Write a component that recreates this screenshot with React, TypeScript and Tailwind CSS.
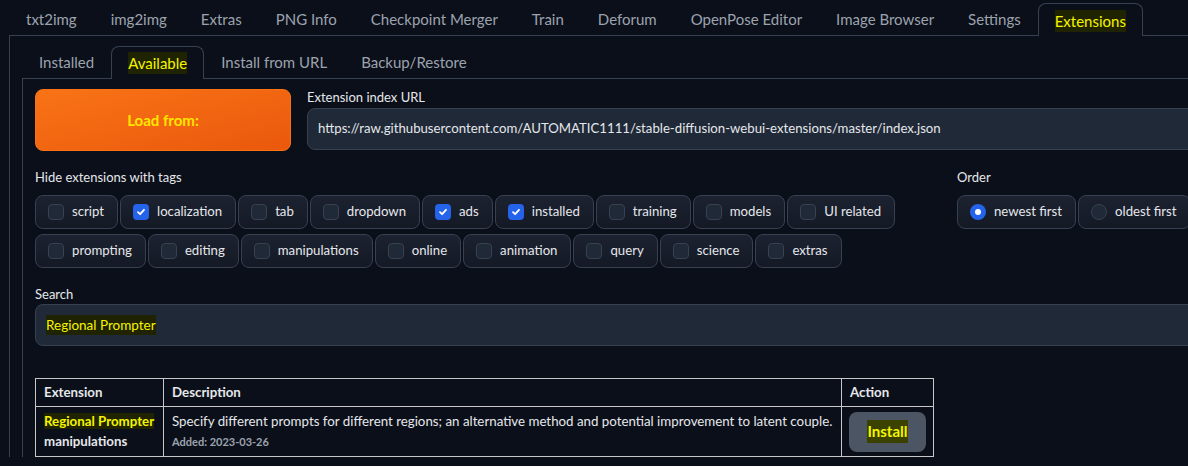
import React from "react";

const topTabs = ["txt2img", "img2img", "Extras", "PNG Info", "Checkpoint Merger", "Train", "Deforum", "OpenPose Editor", "Image Browser", "Settings", "Extensions"];
const subTabs = ["Installed", "Available", "Install from URL", "Backup/Restore"];

const row1 = [
  { label: "script", on: false },
  { label: "localization", on: true },
  { label: "tab", on: false },
  { label: "dropdown", on: false },
  { label: "ads", on: true },
  { label: "installed", on: true },
  { label: "training", on: false },
  { label: "models", on: false },
  { label: "UI related", on: false },
];
const row2 = ["prompting", "editing", "manipulations", "online", "animation", "query", "science", "extras"].map((label) => ({ label, on: false }));

const Hl = ({ children, className = "" }: { children: React.ReactNode; className?: string }) => (
  <span className={"bg-[#1f2300] text-[#f5f500] " + className}>{children}</span>
);

const Check = ({ on }: { on: boolean }) =>
  on ? (
    <span className="flex h-4 w-4 items-center justify-center rounded-[4px] bg-[#2563eb]">
      <svg width="10" height="10" viewBox="0 0 10 10" fill="none">
        <path d="M2 5.2 L4.1 7.2 L8 2.8" stroke="white" strokeWidth="1.8" strokeLinecap="round" strokeLinejoin="round" />
      </svg>
    </span>
  ) : (
    <span className="h-4 w-4 rounded-[4px] border border-[#374151] bg-[#1f2937]" />
  );

const Chip = ({ label, on }: { label: string; on: boolean }) => (
  <label className="flex h-[34px] items-center gap-[8px] rounded-[8px] border border-[#374151] bg-gradient-to-b from-[#1c2230] to-[#141925] pl-[12px] pr-[13px] text-[13.2px] text-[#e5e7eb]">
    <Check on={on} />
    <span>{label}</span>
  </label>
);

const Radio = ({ label, on }: { label: string; on: boolean }) => (
  <label className="flex h-[34px] items-center gap-[8px] rounded-[8px] border border-[#374151] bg-gradient-to-b from-[#1c2230] to-[#141925] pl-[12px] pr-[13px] text-[13.2px] text-[#e5e7eb]">
    {on ? (
      <span className="flex h-4 w-4 items-center justify-center rounded-full bg-[#2563eb]">
        <span className="h-[6px] w-[6px] rounded-full bg-white" />
      </span>
    ) : (
      <span className="h-4 w-4 rounded-full border border-[#374151] bg-[#1f2937]" />
    )}
    <span>{label}</span>
  </label>
);

export default function App() {
  return (
    <div className="h-[466px] w-[1188px] overflow-hidden bg-[#0b0f19] text-[#e5e7eb]" style={{ fontFamily: "Lato, 'Noto Sans', sans-serif" }}>
      <div className="w-[1260px] pl-[9px]">
        {/* top tabs */}
        <div className="flex h-[36px] items-end border-b border-[#374151]">
          {topTabs.map((t) => {
            const sel = t === "Extensions";
            return sel ? (
              <div key={t} className="-mb-px flex h-[33px] items-center rounded-t-[8px] border border-b-0 border-[#374151] bg-[#0b0f19] px-[16px] pt-[2px] text-[15px]">
                <Hl>{t}</Hl>
              </div>
            ) : (
              <div key={t} className="flex h-[33px] items-center px-[17px] pt-[2px] text-[15px] text-[#9ca3af]">
                {t}
              </div>
            );
          })}
        </div>

        {/* outer panel */}
        <div className="border-l border-[#374151] pl-[12px] pt-[11px]">
          {/* sub tabs */}
          <div className="flex h-[32px] items-end border-b border-[#374151]">
            {subTabs.map((t) => {
              const sel = t === "Available";
              return sel ? (
                <div key={t} className="-mb-px flex h-[33px] items-center rounded-t-[8px] border border-b-0 border-[#374151] bg-[#0b0f19] px-[16px] text-[15px]">
                  <Hl>{t}</Hl>
                </div>
              ) : (
                <div key={t} className="flex h-[32px] items-center px-[17px] text-[15px] text-[#9ca3af]">
                  {t}
                </div>
              );
            })}
          </div>

          {/* inner panel */}
          <div className="border-l border-[#374151] pl-[12px] pt-[10px]">
            <div className="flex gap-[16px]">
              <button className="h-[62px] w-[256px] rounded-[8px] border border-[#f97316] bg-gradient-to-br from-[#f97316] to-[#ea580c] text-[15px] font-bold text-[#ffe500]">
                Load from:
              </button>
              <div className="flex-1">
                <div className="mb-[3px] text-[13px] leading-[16px]">Extension index URL</div>
                <div className="flex h-[42px] items-center rounded-[8px] border border-[#374151] bg-[#1f2937] px-[10px] text-[13.2px]">
                  https://raw.githubusercontent.com/AUTOMATIC1111/stable-diffusion-webui-extensions/master/index.json
                </div>
              </div>
            </div>

            <div className="mt-[18px] flex">
              <div className="w-[922px]">
                <div className="mb-[9px] text-[13px] leading-[17px]">Hide extensions with tags</div>
                <div className="flex gap-[2px]">
                  {row1.map((c) => (
                    <Chip key={c.label} {...c} />
                  ))}
                </div>
                <div className="mt-[5px] flex gap-[2px]">
                  {row2.map((c) => (
                    <Chip key={c.label} {...c} />
                  ))}
                </div>
              </div>
              <div>
                <div className="mb-[9px] text-[13px] leading-[17px]">Order</div>
                <div className="flex gap-[2px]">
                  <Radio label="newest first" on />
                  <Radio label="oldest first" on={false} />
                </div>
              </div>
            </div>

            <div className="mt-[18px] text-[13px] leading-[17px]">Search</div>
            <div className="mt-[1px] flex h-[42px] items-center rounded-[8px] border border-[#374151] bg-[#1f2937] px-[10px] text-[13.5px]">
              <Hl>Regional Prompter</Hl>
            </div>

            <table className="mt-[32px] border-collapse text-[13.3px]">
              <thead>
                <tr className="h-[28px]">
                  <th className="w-[128px] border border-[#c8c8c8] px-[8px] text-left font-bold">Extension</th>
                  <th className="w-[678px] border border-[#c8c8c8] px-[8px] text-left font-bold">Description</th>
                  <th className="w-[92px] border border-[#c8c8c8] px-[8px] text-left font-bold">Action</th>
                </tr>
              </thead>
              <tbody>
                <tr className="h-[50px]">
                  <td className="border border-[#c8c8c8] px-[8px] align-top pt-[4px] font-bold leading-[20px]">
                    <Hl>Regional Prompter</Hl>
                    <br />
                    manipulations
                  </td>
                  <td className="border border-[#c8c8c8] px-[8px] align-top pt-[4px] leading-[20px]">
                    Specify different prompts for different regions; an alternative method and potential improvement to latent couple.
                    <br />
                    <span className="text-[11px] font-bold text-[#9ca3af]">Added: 2023-03-26</span>
                  </td>
                  <td className="border border-[#c8c8c8] px-[7px]">
                    <button className="flex h-[40px] w-[77px] items-center justify-center rounded-[8px] bg-[#4b5563] text-[15px] font-bold">
                      <Hl className="bg-[#3b4200]">Install</Hl>
                    </button>
                  </td>
                </tr>
              </tbody>
            </table>
          </div>
        </div>
      </div>
    </div>
  );
}
